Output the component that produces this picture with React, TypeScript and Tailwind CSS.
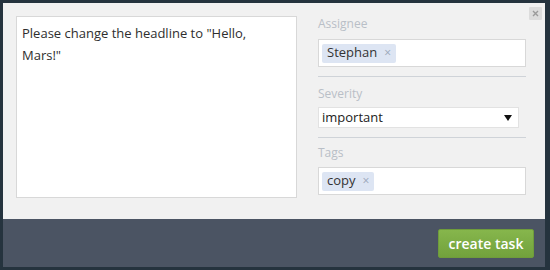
import React from "react";

const Chip = ({ label }: { label: string }) => (
  <span className="flex items-center h-[19px] px-[5px] rounded-[2px] bg-[#dde5f3] text-[13px] text-[#333]">
    {label}
    <span className="ml-[7px] text-[12px] text-[#9aa6b8]">×</span>
  </span>
);

const Label = ({ children }: { children: React.ReactNode }) => (
  <div className="text-[12px] leading-[16px] text-[#b9bfc7]">{children}</div>
);

const App = () => {
  return (
    <div
      className="w-[550px] h-[270px] bg-[#25333e] pt-[3px] pl-[3px] pr-[5px] pb-[3px] flex flex-col"
      style={{ fontFamily: '"Open Sans", "Liberation Sans", sans-serif' }}
    >
      <section className="relative bg-[#f1f1f1] h-[216px] flex pt-[13px] pl-[13px]">
        <button className="absolute top-[4px] right-[3px] w-[13px] h-[13px] bg-[#dcdcdc] rounded-[1px] flex items-center justify-center">
          <svg width="7" height="7" viewBox="0 0 7 7">
            <path d="M1 1L6 6M6 1L1 6" stroke="#9a9a9a" strokeWidth="1.4" />
          </svg>
        </button>
        <div className="w-[281px] h-[182px] bg-white border border-[#d8d8d8] pl-[5px] pr-[20px] pt-[5px] text-[13px] leading-[22px] text-[#2e2e2e]">
          Please change the headline to "Hello, Mars!"
        </div>
        <div className="ml-[21px] w-[208px] flex flex-col">
          <Label>Assignee</Label>
          <div className="mt-[7px] h-[28px] bg-white border border-[#d8d8d8] flex items-center px-[3px]">
            <Chip label="Stephan" />
          </div>
          <div className="mt-[9px] h-[1px] bg-[#cfd3d8]" />
          <div className="mt-[9px]">
            <Label>Severity</Label>
          </div>
          <div className="mt-[5px] w-[201px] h-[21px] bg-white border border-[#e2e2e2] flex items-center justify-between pl-[3px] pr-[6px] text-[13px] text-[#222]">
            important
            <svg width="8" height="6" viewBox="0 0 8 6">
              <path d="M0 0H8L4 6Z" fill="#111" />
            </svg>
          </div>
          <div className="mt-[9px] h-[1px] bg-[#cfd3d8]" />
          <div className="mt-[7px]">
            <Label>Tags</Label>
          </div>
          <div className="mt-[6px] h-[28px] bg-white border border-[#d8d8d8] flex items-center px-[3px]">
            <Chip label="copy" />
          </div>
        </div>
      </section>
      <footer className="flex-1 bg-[#4b5463] flex items-center justify-end pr-[11px]">
        <button className="h-[29px] w-[96px] rounded-[2px] bg-gradient-to-b from-[#86b64c] to-[#72a23c] border border-[#6f9c3b] text-white text-[14px] font-semibold">
          create task
        </button>
      </footer>
    </div>
  );
};

export default App;
